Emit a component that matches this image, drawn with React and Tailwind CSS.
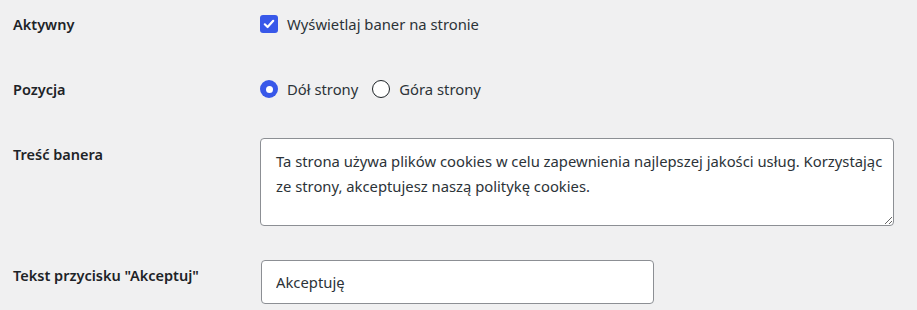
import React, { useState } from "react";

const font = { fontFamily: '"Noto Sans", "Open Sans", sans-serif' };

function Row({ label, labelPad = "", children, className = "" }) {
  return (
    <div className={"flex " + className}>
      <div className={"w-[260px] shrink-0 pl-[13px] text-[14.5px] font-semibold leading-[20px] text-[#1d2327] " + labelPad}>
        {label}
      </div>
      <div className="flex-1">{children}</div>
    </div>
  );
}

export default function App() {
  const [active, setActive] = useState(true);
  const [pos, setPos] = useState("bottom");
  const [text, setText] = useState(
    "Ta strona używa plików cookies w celu zapewnienia najlepszej jakości usług. Korzystając ze strony, akceptujesz naszą politykę cookies."
  );
  const [btn, setBtn] = useState("Akceptuję");

  return (
    <div className="h-[310px] w-[917px] overflow-hidden bg-[#f0f0f1] text-[#1d2327]" style={font}>
      <Row label="Aktywny" className="items-center pt-[14px]">
        <label className="flex items-center gap-[9px] text-[14.8px] leading-[20px] text-[#2c3338]">
          <button
            type="button"
            onClick={() => setActive(!active)}
            className={
              "flex h-[18px] w-[18px] items-center justify-center rounded-[3px] " +
              (active ? "bg-[#3858e9]" : "border border-[#8c8f94] bg-white")
            }
          >
            {active && (
              <svg width="12" height="12" viewBox="0 0 12 12" fill="none">
                <path d="M1.8 6.3 L4.6 9 L10.2 2.8" stroke="white" strokeWidth="2.2" strokeLinecap="round" strokeLinejoin="round" />
              </svg>
            )}
          </button>
          Wyświetlaj baner na stronie
        </label>
      </Row>

      <Row label="Pozycja" className="mt-[45px] items-center">
        <div className="flex items-center text-[14.8px] leading-[20px] text-[#2c3338]">
          {[
            ["bottom", "Dół strony"],
            ["top", "Góra strony"],
          ].map(([v, t]) => (
            <label key={v} className="mr-[14px] flex cursor-pointer items-center gap-[9px]" onClick={() => setPos(v)}>
              <span
                className={
                  "flex h-[18px] w-[18px] items-center justify-center rounded-full " +
                  (pos === v ? "bg-[#3858e9]" : "border border-[#1d2327] bg-white")
                }
              >
                {pos === v && <span className="h-[7px] w-[7px] rounded-full bg-white" />}
              </span>
              {t}
            </label>
          ))}
        </div>
      </Row>

      <Row label="Treść banera" labelPad="pt-[6px]" className="mt-[39px] items-start">
        <textarea
          value={text}
          onChange={(e) => setText(e.target.value)}
          className="block h-[88px] w-[634px] resize rounded-[4px] border border-[#8c8f94] bg-white pl-[15px] pr-0 pt-[10px] text-[14.8px] leading-[25px] text-[#2c3338] outline-none"
        />
      </Row>

      <Row label='Tekst przycisku "Akceptuj"' labelPad="pt-[5px]" className="mt-[34px] items-start">
        <input
          value={btn}
          onChange={(e) => setBtn(e.target.value)}
          className="ml-[1px] block h-[44px] w-[393px] rounded-[4px] border border-[#8c8f94] bg-white px-[14px] text-[14.8px] text-[#2c3338] outline-none"
        />
      </Row>
    </div>
  );
}
